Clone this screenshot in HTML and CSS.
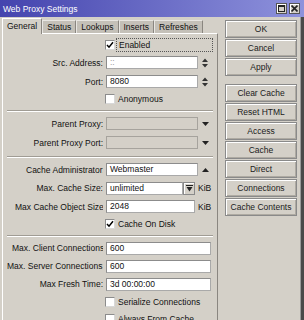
FILE: index.html
```html
<!DOCTYPE html>
<html>
<head>
    <link rel="stylesheet" href="styles.css">
</head>
<body>
    <div class="window">
        <div class="titlebar">
            <span class="title">Web Proxy Settings</span>
            <div class="caption-btns">
                <span class="cap-btn">
                    <svg width="7" height="7" viewBox="0 0 7 7"><rect x="0.5" y="0.5" width="6" height="6" fill="none" stroke="#222"/><line x1="0" y1="1.5" x2="7" y2="1.5" stroke="#222"/></svg>
                </span>
                <span class="cap-btn">
                    <svg width="7" height="7" viewBox="0 0 7 7"><path d="M0.5 0.5 L6.5 6.5 M6.5 0.5 L0.5 6.5" stroke="#222" stroke-width="1.6"/></svg>
                </span>
            </div>
        </div>

        <div class="main">
            <div class="tabbox">
                <div class="tabs">
                    <div class="tab active">General</div>
                    <div class="tab">Status</div>
                    <div class="tab">Lookups</div>
                    <div class="tab">Inserts</div>
                    <div class="tab">Refreshes</div>
                </div>

                <div class="panel">
                    <div class="row check-row r17">
                        <span class="checkbox checked"><svg width="8" height="8" viewBox="0 0 8 8"><path d="M1 4 L3 6.2 L7 1.2" fill="none" stroke="#000" stroke-width="1.5"/></svg></span>
                        <span class="check-label focused">Enabled</span>
                    </div>

                    <div class="row">
                        <span class="label">Src. Address:</span>
                        <span class="field placeholder">::</span>
                        <span class="spin"><svg width="6" height="10" viewBox="0 0 6 10"><path d="M0 4 L3 0.5 L6 4 Z M0 6 L6 6 L3 9.5 Z" fill="#333"/></svg></span>
                    </div>
                    <div class="row">
                        <span class="label">Port:</span>
                        <span class="field">8080</span>
                        <span class="spin"><svg width="6" height="10" viewBox="0 0 6 10"><path d="M0 4 L3 0.5 L6 4 Z M0 6 L6 6 L3 9.5 Z" fill="#333"/></svg></span>
                    </div>
                    <div class="row check-row r15">
                        <span class="checkbox"></span>
                        <span class="check-label">Anonymous</span>
                    </div>

                    <div class="sep"></div>

                    <div class="row">
                        <span class="label">Parent Proxy:</span>
                        <span class="field disabled"></span>
                        <span class="drop"><svg width="7" height="4" viewBox="0 0 7 4"><path d="M0 0 L7 0 L3.5 4 Z" fill="#222"/></svg></span>
                    </div>
                    <div class="row">
                        <span class="label">Parent Proxy Port:</span>
                        <span class="field disabled"></span>
                        <span class="drop"><svg width="7" height="4" viewBox="0 0 7 4"><path d="M0 0 L7 0 L3.5 4 Z" fill="#222"/></svg></span>
                    </div>

                    <div class="sep"></div>

                    <div class="row">
                        <span class="label clip clip-admin">Cache Administrator:</span>
                        <span class="field">Webmaster</span>
                        <span class="drop"><svg width="7" height="4" viewBox="0 0 7 4"><path d="M0 4 L7 4 L3.5 0 Z" fill="#222"/></svg></span>
                    </div>
                    <div class="row r18">
                        <span class="label">Max. Cache Size:</span>
                        <span class="field narrow">unlimited</span>
                        <span class="mini-btn"><svg width="7" height="7" viewBox="0 0 7 7"><path d="M0 0.5 L7 0.5" stroke="#222"/><path d="M0.5 2 L6.5 2 L3.5 6.5 Z" fill="#222"/></svg></span>
                        <span class="unit">KiB</span>
                    </div>
                    <div class="row">
                        <span class="label clip clip-object">Max Cache Object Size:</span>
                        <span class="field mid">2048</span>
                        <span class="unit">KiB</span>
                    </div>
                    <div class="row check-row r15">
                        <span class="checkbox checked"><svg width="8" height="8" viewBox="0 0 8 8"><path d="M1 4 L3 6.2 L7 1.2" fill="none" stroke="#000" stroke-width="1.5"/></svg></span>
                        <span class="check-label">Cache On Disk</span>
                    </div>

                    <div class="sep"></div>

                    <div class="row r18">
                        <span class="label clip clip-client">Max. Client Connections:</span>
                        <span class="field wide">600</span>
                    </div>
                    <div class="row r18">
                        <span class="label clip">Max. Server Connections:</span>
                        <span class="field wide">600</span>
                    </div>
                    <div class="row r18">
                        <span class="label">Max Fresh Time:</span>
                        <span class="field wide">3d 00:00:00</span>
                    </div>
                    <div class="row check-row r17">
                        <span class="checkbox"></span>
                        <span class="check-label">Serialize Connections</span>
                    </div>
                    <div class="row check-row r17">
                        <span class="checkbox"></span>
                        <span class="check-label">Always From Cache</span>
                    </div>
                </div>
            </div>

            <div class="actions">
                <button class="btn">OK</button>
                <button class="btn">Cancel</button>
                <button class="btn">Apply</button>
                <button class="btn group-start">Clear Cache</button>
                <button class="btn">Reset HTML</button>
                <button class="btn">Access</button>
                <button class="btn">Cache</button>
                <button class="btn">Direct</button>
                <button class="btn">Connections</button>
                <button class="btn">Cache Contents</button>
            </div>

            <div class="edge"></div>
        </div>
    </div>
</body>
</html>
```

FILE: styles.css
```css
* {
    margin: 0;
    padding: 0;
    box-sizing: border-box;
}

body {
    width: 304px;
    height: 320px;
    overflow: hidden;
    background: #d4d0c8;
    font-family: "Liberation Sans", Arial, sans-serif;
    font-size: 8.5px;
    color: #111;
}

.window {
    display: flex;
    flex-direction: column;
    height: 100%;
}

/* title bar */

.titlebar {
    height: 17px;
    display: flex;
    align-items: center;
    padding: 0 4px 0 3px;
    background: linear-gradient(to right, #4444ae, #8e92dc);
    flex: none;
}

.title {
    color: #fff;
    font-size: 8.5px;
}

.caption-btns {
    margin-left: auto;
    display: flex;
    gap: 2px;
}

.cap-btn {
    width: 11px;
    height: 11px;
    background: #d4d0c8;
    border: 1px solid #555;
    box-shadow: inset 1px 1px 0 #fff;
    display: flex;
    align-items: center;
    justify-content: center;
}

/* body */

.main {
    flex: 1;
    display: flex;
}

.tabbox {
    width: 216px;
    margin-left: 2px;
    display: flex;
    flex-direction: column;
}

.tabs {
    height: 16px;
    display: flex;
    align-items: flex-end;
}

.tab {
    height: 13px;
    padding: 0 4px;
    line-height: 12px;
    background: #c4c0b8;
    border-top: 1px solid #e8e6e2;
    border-left: 1px solid #e8e6e2;
    border-right: 1px solid #8a8680;
    white-space: nowrap;
}

.tab.active {
    height: 16px;
    line-height: 14px;
    background: #d4d0c8;
    border-top-color: #fff;
    border-left-color: #fff;
    position: relative;
    margin-bottom: -1px;
    z-index: 1;
}

.panel {
    flex: 1;
    border-top: 1px solid #fff;
    border-left: 1px solid #fff;
    border-right: 1px solid #8a8680;
    padding: 2px 4px 0 4px;
    overflow: hidden;
}

.row {
    display: flex;
    align-items: center;
    height: 19px;
}

.row.r18 { height: 18px; }
.row.r17 { height: 17px; }
.row.r15 { height: 15px; }

.label {
    width: 96px;
    margin-right: 3px;
    flex: none;
    text-align: right;
    white-space: nowrap;
    overflow: hidden;
}

.label.clip { text-align: left; }
.label.clip-admin { padding-left: 19px; }
.label.clip-object { padding-left: 8px; }
.label.clip-client { padding-left: 5px; }

.field {
    width: 92px;
    height: 13px;
    flex: none;
    background: #fff;
    border: 1px solid #a9a9a9;
    border-top-color: #8c8c8c;
    border-left-color: #8c8c8c;
    padding-left: 3px;
    line-height: 11px;
    white-space: nowrap;
    overflow: hidden;
}

.field.placeholder { color: #9a9a9a; }
.field.disabled { background: #d4d0c8; border-color: #a6a39d; }
.field.wide { width: 105px; }
.field.mid { width: 89px; }
.field.narrow { width: 77px; }

.spin,
.drop {
    margin-left: 4px;
    display: flex;
    align-items: center;
}

.mini-btn {
    width: 12px;
    height: 13px;
    border: 1px solid #8a8a8a;
    box-shadow: inset 1px 1px 0 #fff;
    display: flex;
    align-items: center;
    justify-content: center;
}

.unit {
    margin-left: 3px;
}

.check-row {
    padding-left: 98px;
}

.checkbox {
    width: 10px;
    height: 10px;
    flex: none;
    background: #fff;
    border: 1px solid #8c8c8c;
    border-right-color: #d8d8d8;
    border-bottom-color: #d8d8d8;
    display: flex;
    align-items: center;
    justify-content: center;
}

.check-label {
    margin-left: 3px;
    white-space: nowrap;
}

.check-label.focused {
    flex: 1;
    height: 14px;
    line-height: 12px;
    margin-left: 1px;
    padding-left: 2px;
    border: 1px dotted #555;
}

.sep {
    height: 2px;
    margin: 4px 0 2px 0;
    border-top: 1px solid #a09c94;
    border-bottom: 1px solid #fff;
}

/* right-hand buttons */

.actions {
    width: 72px;
    margin-left: 7px;
    padding-top: 3px;
    display: flex;
    flex-direction: column;
    gap: 1px;
}

.btn {
    height: 18px;
    background: #d4d0c8;
    border: 1px solid #8a8a8a;
    box-shadow: inset 1px 1px 0 #fff, inset -1px -1px 0 #aeaaa2;
    font-family: inherit;
    font-size: 8.5px;
    color: #202020;
    white-space: nowrap;
}

.btn.group-start {
    margin-top: 7px;
}

.edge {
    width: 4px;
    margin-left: 3px;
    background: #4a4a4a;
    border-left: 1px solid #9a9a9a;
}
```
